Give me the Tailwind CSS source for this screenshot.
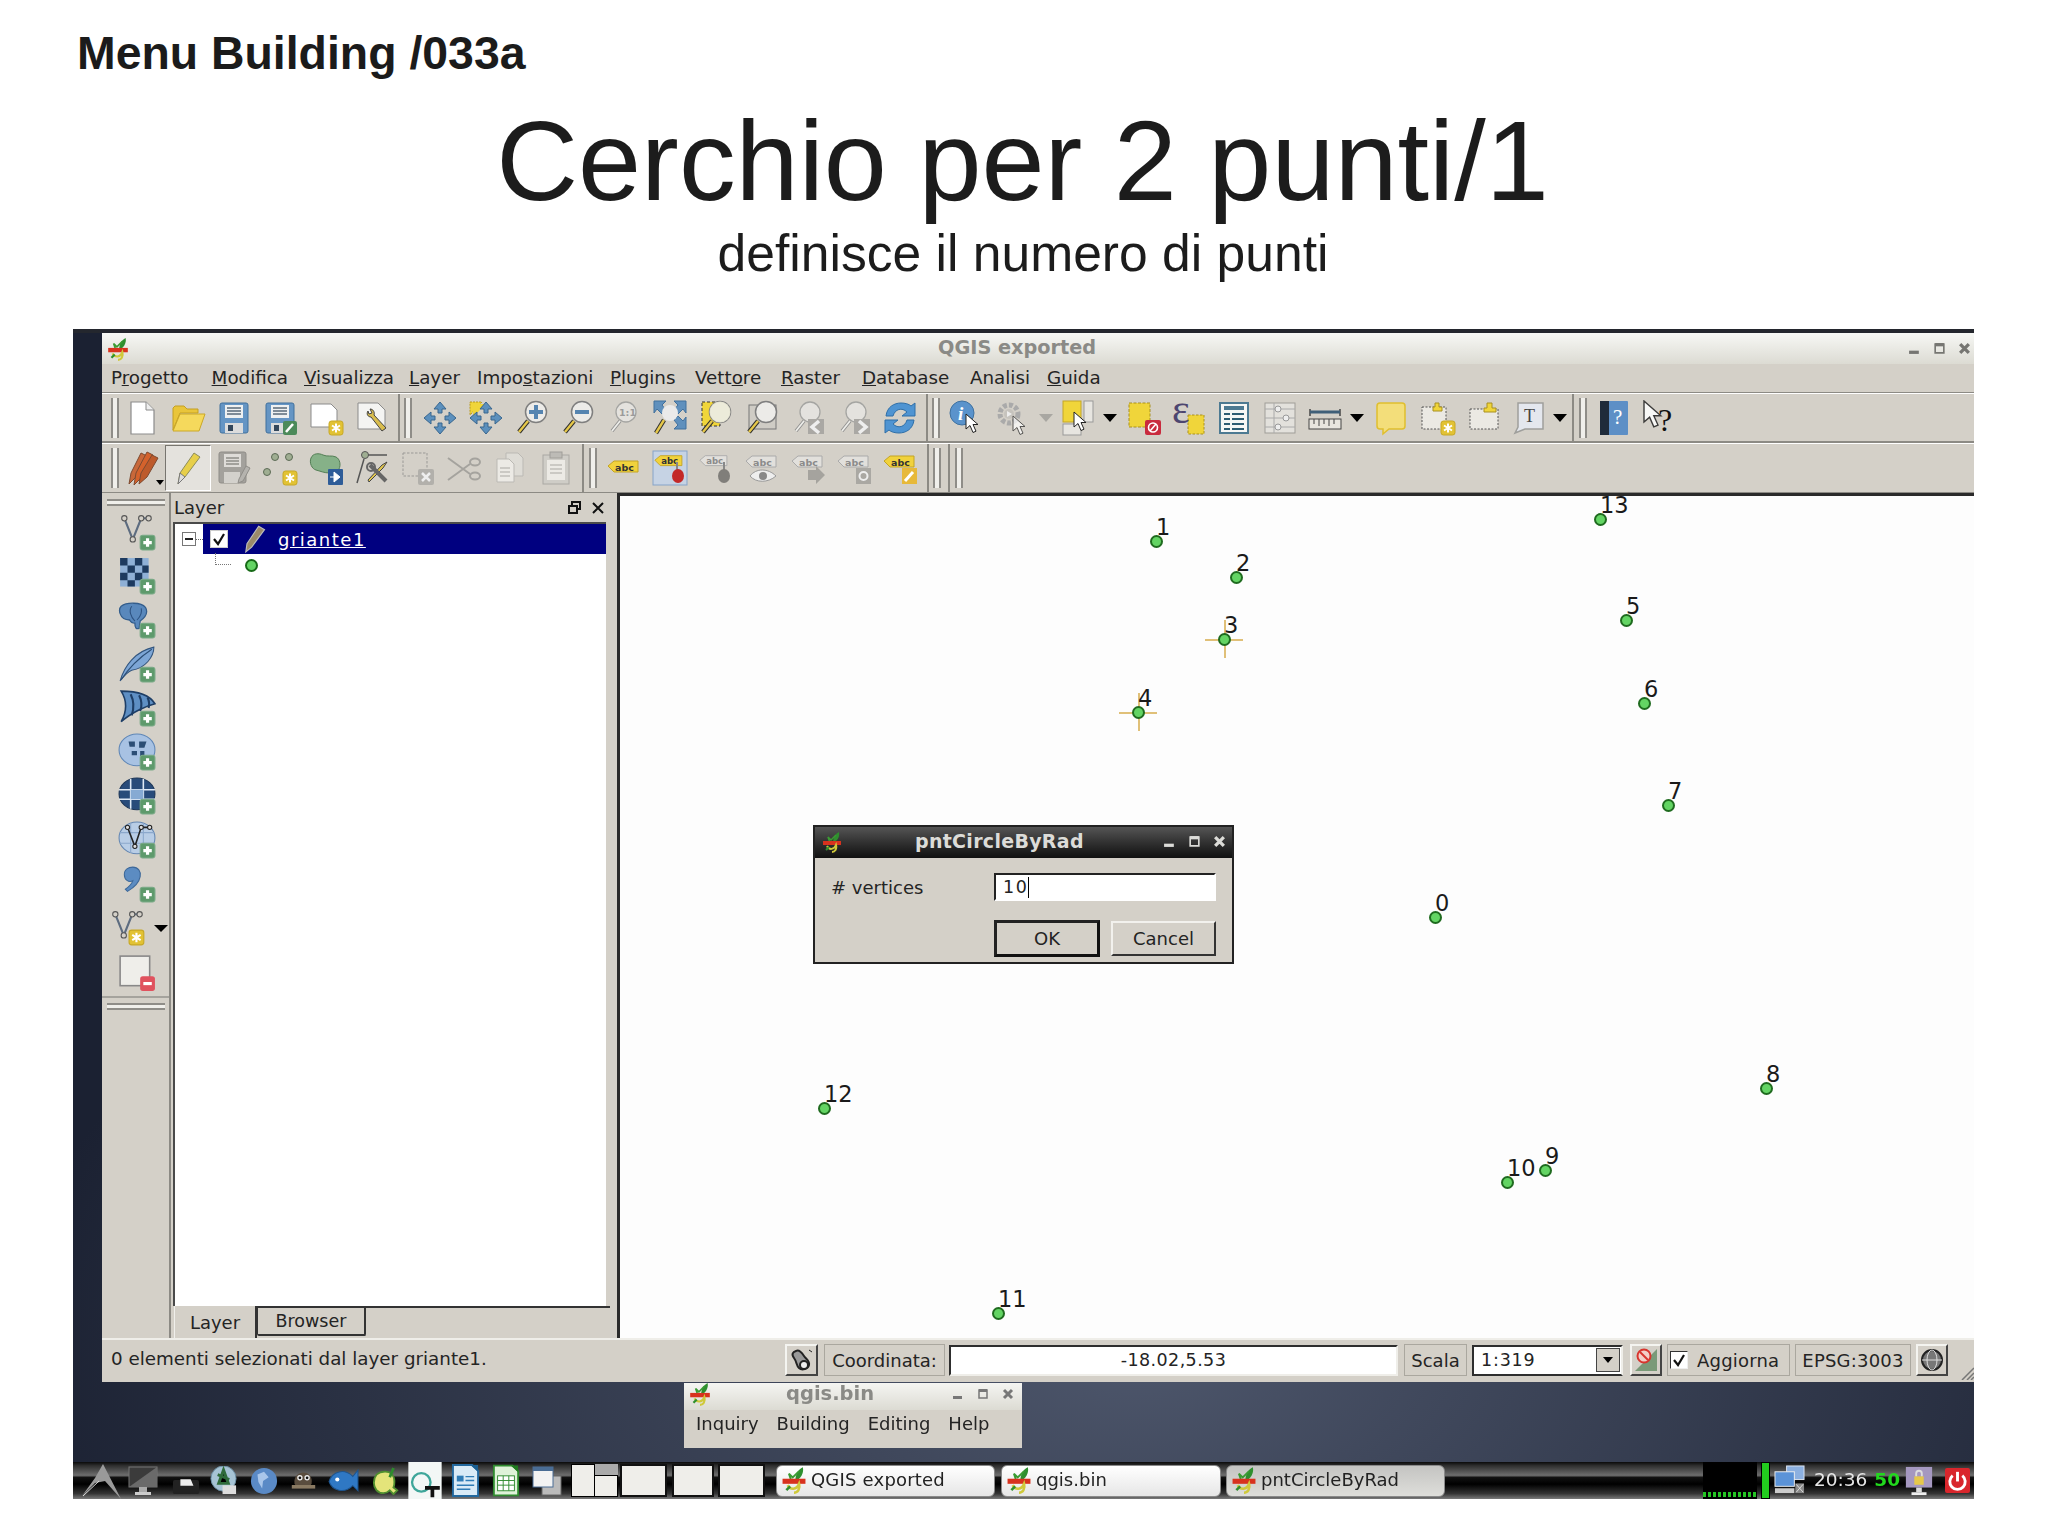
<!DOCTYPE html>
<html lang="it">
<head>
<meta charset="utf-8">
<title>Menu Building /033a</title>
<script src="https://cdn.jsdelivr.net/npm/@tailwindcss/browser@4"></script>
</head>
<body class="bg-white">
<svg class="block h-0 w-0" aria-hidden="true">
<defs>
<g id="lens"><path d="M14 21L5 32" stroke="#2f2f2f" stroke-width="4.4"/><path d="M14 21L5 32" stroke="#e6c84a" stroke-width="2.4"/><circle cx="22" cy="12" r="10.5" fill="#ecebe8" stroke="#7f7f7f" stroke-width="1.5"/></g>
<g id="glens"><path d="M14 21L6 31" stroke="#8f8f8f" stroke-width="3.6"/><path d="M14 21L6 31" stroke="#eeeeea" stroke-width="1.8"/><circle cx="20" cy="12" r="10" fill="#e4e2de" stroke="#a5a5a2" stroke-width="1.3"/></g>
<g id="arrows" fill="#5c90bd" stroke="#39668e"><path d="M18 2l6 7h-4v4h-4v-4h-4z"/><path d="M18 34l6-7h-4v-4h-4v4h-4z"/><path d="M2 18l7-6v4h4v4H9v4z"/><path d="M34 18l-7-6v4h-4v4h4v4z"/></g>
<g id="plus"><rect x="21" y="21" width="14" height="14" rx="2.5" fill="#5e9a6c" stroke="#79a986"/><path d="M28 24v8M24 28h8" stroke="#fff" stroke-width="3"/></g>
<g id="star"><rect x="21" y="21" width="14" height="14" rx="2.5" fill="#e2c234" stroke="#c7a826"/><path d="M28 23.5v9M24 25.5l8 5M32 25.5l-8 5" stroke="#fff" stroke-width="2"/></g>
<g id="abc"><path d="M1 8l6-5h24v11H7z" fill="#f1d23c" stroke="#c3a424"/><text x="8" y="12.5" font-family="DejaVu Sans" font-size="9.5" font-weight="700" fill="#333">abc</text></g>
<g id="gabc"><path d="M1 8l6-5h24v11H7z" fill="#e2e0dc" stroke="#aaa"/><text x="8" y="12.5" font-family="DejaVu Sans" font-size="9.5" font-weight="700" fill="#8b8b8b">abc</text></g>
<g id="cursor"><path d="M0 0v15l4-3.500 3 7 3-1.300-3-6.700h5z" fill="#fff" stroke="#222"/></g>
<g id="logo"><path d="M17 1c1 5-2 9-6 11 0-5 2-9 6-11z" fill="#2f8f2f"/><path d="M14 4l-5 5-3-3 2 6" stroke="#3a9b32" fill="none" stroke-width="1.500"/><rect x="1" y="10" width="18" height="4" fill="#d8321e"/><path d="M5 15c2 4 7 4 9-1 1 4-1 7-4 7" stroke="#cfc93a" stroke-width="2" fill="none"/><path d="M4 19l3-3" stroke="#2f8f2f" stroke-width="2"/></g>
<g id="v"><path d="M6 5l8 20 8-20h6" fill="none" stroke="#5d6c80" stroke-width="2"/><circle cx="6" cy="5" r="2.500" fill="#d4d0c8" stroke="#555"/><circle cx="14" cy="25" r="2.500" fill="#d4d0c8" stroke="#555"/><circle cx="22" cy="5" r="2.500" fill="#d4d0c8" stroke="#555"/><circle cx="29" cy="5" r="2.500" fill="#d4d0c8" stroke="#555"/></g>
<symbol id="new" viewBox="0 0 36 36"><path d="M7 2h15l8 8v24H7z" fill="#fff" stroke="#8b8b8b" stroke-width="1.200"/><path d="M22 2v8h8" fill="#eee" stroke="#8b8b8b"/></symbol>
<symbol id="open" viewBox="0 0 36 36"><path d="M3 30V8l2-2h9l3 3h11v4H10L3 30z" fill="#e9c53a" stroke="#c49f22"/><path d="M3 31l7-17h25l-6 17z" fill="#f5d95c" stroke="#cba826"/></symbol>
<symbol id="save" viewBox="0 0 36 36"><rect x="4" y="3" width="28" height="30" rx="2" fill="#6595c4" stroke="#41709d"/><rect x="9" y="5" width="18" height="13" fill="#eef0f1"/><path d="M11 8h14M11 11h14M11 14h14" stroke="#5a6a7a" stroke-width="1.500"/><rect x="9" y="23" width="18" height="10" fill="#dcdcdc"/><rect x="12" y="25" width="5" height="6" fill="#33475c"/></symbol>
<symbol id="saveas" viewBox="0 0 36 36"><use href="#save"/><rect x="21" y="21" width="14" height="14" rx="2" fill="#4c8a5a"/><path d="M24 32l7-8" stroke="#fff" stroke-width="2.500"/></symbol>
<symbol id="newc" viewBox="0 0 36 36"><path d="M3 4h20l6 6v17H3z" fill="#fff" stroke="#8b8b8b"/><use href="#star"/></symbol>
<symbol id="comp" viewBox="0 0 36 36"><path d="M4 3h20l7 7v19H4z" fill="#f4f4f2" stroke="#8b8b8b"/><path d="M14 11c-2 3 0 6 3 6l11 14 4-3-12-13c1-3-1-6-4-6l2 4-3 1z" fill="#d9bd4e" stroke="#444"/></symbol>
<symbol id="pan" viewBox="0 0 36 36"><use href="#arrows"/></symbol>
<symbol id="pansel" viewBox="0 0 36 36"><path d="M2 2h12L2 15z" fill="#f0d53a" stroke="#b89a20" stroke-dasharray="2 1"/><path d="M5 4h13L5 17z" fill="#f0d53a"/><use href="#arrows"/></symbol>
<symbol id="zin" viewBox="0 0 36 36"><use href="#lens"/><path d="M22 5v14M15 12h14" stroke="#5584b0" stroke-width="4"/></symbol>
<symbol id="zout" viewBox="0 0 36 36"><use href="#lens"/><path d="M15 12h14" stroke="#5584b0" stroke-width="4"/></symbol>
<symbol id="z11" viewBox="0 0 36 36"><use href="#glens"/><text x="13" y="16" font-family="DejaVu Sans" font-size="9.500" font-weight="700" fill="#9b9b9b">1:1</text></symbol>
<symbol id="zfull" viewBox="0 0 36 36"><path d="M2 1h12l-4 4 4 5-4 4-5-5-3 4zM34 1H22l4 4-4 5 4 4 5-5 3 4zM34 29H22l4-4-4-5 4-4 5 5 3-4z" fill="#5f90bd" stroke="#41709d"/><circle cx="18" cy="13" r="8" fill="#eaeaea"/><path d="M12 20L4 33" stroke="#2f2f2f" stroke-width="4.400"/><path d="M12 20L4 33" stroke="#e6c84a" stroke-width="2.400"/></symbol>
<symbol id="zsel" viewBox="0 0 36 36"><rect x="4" y="2" width="18" height="24" fill="#f0d53a" stroke="#333" stroke-dasharray="3 2"/><use href="#lens"/><circle cx="22" cy="12" r="10.500" fill="#ecebd8" opacity=".9"/></symbol>
<symbol id="zlay" viewBox="0 0 36 36"><rect x="5" y="5" width="27" height="24" fill="#cfccc5" stroke="#777"/><use href="#lens"/></symbol>
<symbol id="zlast" viewBox="0 0 36 36"><use href="#glens"/><rect x="18" y="19" width="16" height="15" fill="#aaa8a4"/><path d="M29 21l-7 6 7 6" stroke="#eee" stroke-width="3.500" fill="none"/></symbol>
<symbol id="znext" viewBox="0 0 36 36"><use href="#glens"/><rect x="18" y="19" width="16" height="15" fill="#aaa8a4"/><path d="M23 21l7 6-7 6" stroke="#eee" stroke-width="3.500" fill="none"/></symbol>
<symbol id="refresh" viewBox="0 0 36 36"><path d="M4 16C5 7 12 3 19 3c4 0 8 1 10 3l4-3v13H20l5-4c-5-5-12-3-14 4z" fill="#4f94d2" stroke="#2f6fa8"/><path d="M32 20c-1 9-8 13-15 13-4 0-8-1-10-3l-4 3V20h13l-5 4c5 5 12 3 14-4z" fill="#4f94d2" stroke="#2f6fa8"/></symbol>
<symbol id="ident" viewBox="0 0 36 36"><circle cx="13" cy="13" r="12" fill="#5a93cc" stroke="#3f719f"/><text x="9" y="20" font-family="Liberation Serif" font-size="19" font-weight="700" font-style="italic" fill="#fff">i</text><use href="#cursor" transform="translate(17 14)"/></symbol>
<symbol id="action" viewBox="0 0 36 36"><circle cx="14" cy="14" r="9" fill="none" stroke="#aaa" stroke-width="5" stroke-dasharray="4 2"/><circle cx="14" cy="14" r="5" fill="#c6c3bd"/><path d="M12 11l5 3-5 3z" fill="#eee"/><use href="#cursor" transform="translate(18 16)" opacity=".7"/></symbol>
<symbol id="select" viewBox="0 0 36 36"><rect x="3" y="1" width="18" height="21" fill="#f0d53a" stroke="#c4a626"/><rect x="24" y="1" width="9" height="21" fill="#e7e5e0" stroke="#999"/><rect x="3" y="24" width="18" height="11" fill="#e7e5e0" stroke="#999"/><use href="#cursor" transform="translate(14 12)"/></symbol>
<symbol id="desel" viewBox="0 0 36 36"><rect x="3" y="3" width="21" height="24" fill="#f0d53a" stroke="#a89020" stroke-dasharray="3 1.500"/><rect x="19" y="20" width="16" height="15" rx="2" fill="#c92b3e"/><circle cx="27" cy="27.500" r="4.500" fill="none" stroke="#fff" stroke-width="1.600"/><path d="M24 31l6-7" stroke="#fff" stroke-width="1.600"/></symbol>
<symbol id="expr" viewBox="0 0 36 36"><rect x="17" y="15" width="16" height="19" fill="#f0d53a" stroke="#a89020" stroke-dasharray="2.500 1.500"/><text x="1" y="23" font-family="Liberation Serif" font-size="42" fill="#4d4670">ε</text></symbol>
<symbol id="table" viewBox="0 0 36 36"><rect x="4" y="3" width="28" height="30" fill="#f7f7f5" stroke="#4d7a92" stroke-width="2"/><rect x="8" y="6" width="20" height="4" fill="#4d7a92"/><path d="M8 14h6M16 14h12M8 19h6M16 19h12M8 24h6M16 24h12M8 29h6M16 29h12" stroke="#2f5d73" stroke-width="2"/></symbol>
<symbol id="stats" viewBox="0 0 36 36"><rect x="3" y="3" width="30" height="30" fill="#e3e1dc" stroke="#9f9d98"/><path d="M3 9h30M3 18h30M3 27h30M12 3v30" stroke="#aaa"/><circle cx="16" cy="9" r="3" fill="#eee" stroke="#999"/><circle cx="24" cy="18" r="3" fill="#eee" stroke="#999"/><circle cx="16" cy="27" r="3" fill="#eee" stroke="#999"/></symbol>
<symbol id="measure" viewBox="0 0 36 36"><path d="M3 9v7M33 9v7" stroke="#444" stroke-width="1.500"/><path d="M3 12h30" stroke="#3f5f78" stroke-width="3"/><rect x="2" y="19" width="32" height="10" fill="#e8e6e0" stroke="#444"/><path d="M7 19v5M12 19v7M17 19v5M22 19v7M27 19v5" stroke="#444"/></symbol>
<symbol id="tip" viewBox="0 0 36 36"><path d="M8 3h21a3 3 0 013 3v20a3 3 0 01-3 3H16l-6 5v-5H7a3 3 0 01-3-3V6a3 3 0 013-3z" fill="#f3de7a" stroke="#e0bf2e" stroke-width="1.500"/></symbol>
<symbol id="annew" viewBox="0 0 36 36"><rect x="2" y="7" width="24" height="22" fill="#ebe9e3" stroke="#555" stroke-dasharray="2 1.500"/><path d="M15 3h4v4h3v4H13V7h2z" fill="#f0d53a" stroke="#a89020"/><use href="#star"/></symbol>
<symbol id="anmove" viewBox="0 0 36 36"><rect x="4" y="9" width="28" height="20" fill="#ebe9e3" stroke="#555" stroke-dasharray="2 1.500"/><path d="M21 3h5v5h4v4H18V8h3z" fill="#f0d53a" stroke="#a89020"/></symbol>
<symbol id="tann" viewBox="0 0 36 36"><path d="M7 3h25v26H14l-10 4 3-6z" fill="#e4e7ee" stroke="#9f9f9c" stroke-width="1.500"/><text x="13" y="22" font-family="Liberation Serif" font-size="18" fill="#444">T</text></symbol>
<symbol id="help" viewBox="0 0 36 36"><rect x="4" y="1" width="28" height="34" rx="1" fill="#5d8fc6"/><rect x="4" y="1" width="9" height="34" fill="#1f2b3a"/><text x="17" y="24" font-family="Liberation Serif" font-size="21" fill="#fff">?</text></symbol>
<symbol id="whats" viewBox="0 0 36 36"><use href="#cursor" transform="translate(2 1) scale(1.400)" opacity=".85"/><text x="16" y="31" font-family="Liberation Serif" font-size="32" fill="#111">?</text></symbol>
<symbol id="pencils" viewBox="0 0 36 36"><path d="M5 34l2-11L17 3l6 3-11 21z" fill="#c8683a" stroke="#7d4a30"/><path d="M10 35l2-12L23 2l6 3-10 21z" fill="#d4622c" stroke="#7d4a30"/><path d="M15 34l2-11L28 5l6 3-11 19z" fill="#bd5a2b" stroke="#7d4a30"/></symbol>
<symbol id="pencil" viewBox="0 0 36 36"><path d="M8 34l2-11L24 3l6 4-15 20z" fill="#e7cf4a" stroke="#8c8c5a"/><path d="M8 34l2-11 5 4z" fill="#ddd" stroke="#777"/></symbol>
<symbol id="gsave" viewBox="0 0 36 36"><rect x="3" y="2" width="27" height="31" rx="2" fill="#a3a19c" stroke="#8f8d88"/><rect x="8" y="4" width="17" height="13" fill="#dedcd8"/><path d="M10 8h13M10 11h13M10 14h13" stroke="#8f8d88" stroke-width="1.500"/><rect x="8" y="22" width="16" height="11" fill="#d3d1cc"/><path d="M22 33l5-2 7-13-4-2-7 13z" fill="#b5b3ae" stroke="#8f8d88"/></symbol>
<symbol id="addpt" viewBox="0 0 36 36"><circle cx="13" cy="7" r="3.500" fill="#9fae92" stroke="#5c6a55"/><circle cx="27" cy="7" r="3.500" fill="#9fae92" stroke="#5c6a55"/><circle cx="5" cy="22" r="3.500" fill="#9fae92" stroke="#5c6a55"/><use href="#star"/></symbol>
<symbol id="addpoly" viewBox="0 0 36 36"><path d="M3 8c2-5 8-5 12-3s9 0 13 2 5 8 3 12-3 4-9 4-10-2-14-3-7-7-5-12z" fill="#86b188" stroke="#537e55"/><rect x="20" y="19" width="15" height="16" rx="1" fill="#2e5c98"/><path d="M22 27h6M26 22l6 5-6 5z" fill="#fff" stroke="#fff"/></symbol>
<symbol id="node" viewBox="0 0 36 36"><circle cx="11" cy="5" r="3.500" fill="#9fae92" stroke="#555"/><path d="M10 9L3 33M14 5h19" stroke="#555" stroke-width="1.500"/><path d="M15 32l14-14 4-6-5 3-14 15z" fill="#e2c74e" stroke="#444"/><path d="M16 15l16 16" stroke="#666" stroke-width="4"/><circle cx="17" cy="17" r="4" fill="none" stroke="#666" stroke-width="2"/></symbol>
<symbol id="delsel" viewBox="0 0 36 36"><rect x="3" y="3" width="24" height="23" fill="none" stroke="#9a9996" stroke-dasharray="2.500 1.500"/><rect x="18" y="19" width="16" height="16" rx="2" fill="#b2b0ab"/><path d="M22 23l8 8M30 23l-8 8" stroke="#eee" stroke-width="2.500"/></symbol>
<symbol id="scissors" viewBox="0 0 36 36"><path d="M2 8l22 16M2 30l22-16" stroke="#a5a39e" stroke-width="2"/><ellipse cx="29" cy="26" rx="5" ry="3.500" fill="none" stroke="#a5a39e" stroke-width="2"/><ellipse cx="29" cy="12" rx="5" ry="3.500" fill="none" stroke="#a5a39e" stroke-width="2"/></symbol>
<symbol id="copy" viewBox="0 0 36 36"><path d="M14 3h12l5 5v18H14z" fill="#dedcd6" stroke="#bbb9b4"/><path d="M5 9h12l5 5v18H5z" fill="#eceae5" stroke="#bbb9b4"/><path d="M8 18h10M8 22h10M8 26h10" stroke="#aaa8a3"/></symbol>
<symbol id="paste" viewBox="0 0 36 36"><rect x="5" y="5" width="26" height="29" fill="#cfcdc7" stroke="#aaa8a3"/><rect x="12" y="2" width="12" height="6" fill="#bdbbb6" stroke="#a09e99"/><rect x="9" y="10" width="18" height="20" fill="#eceae5"/><path d="M12 15h12M12 19h12M12 23h12" stroke="#aaa8a3"/></symbol>
<symbol id="lb1" viewBox="0 0 36 36"><use href="#abc" transform="translate(1 8)"/></symbol>
<symbol id="lb2" viewBox="0 0 36 36"><rect x="1" y="1" width="34" height="34" fill="#c6d3e4" stroke="#86a3c8"/><use href="#abc" transform="translate(2 3) scale(.9)"/><path d="M25 12v10" stroke="#888" stroke-width="2"/><ellipse cx="26" cy="26" rx="6" ry="7" fill="#c32828"/></symbol>
<symbol id="lb3" viewBox="0 0 36 36"><use href="#gabc" transform="translate(1 3) scale(.9)"/><path d="M26 12v10" stroke="#888" stroke-width="2"/><ellipse cx="26" cy="26" rx="6" ry="7" fill="#807e7a"/></symbol>
<symbol id="lb4" viewBox="0 0 36 36"><use href="#gabc" transform="translate(1 3)"/><path d="M6 26c6-8 18-8 26 0-8 7-20 7-26 0z" fill="#eee" stroke="#999"/><circle cx="19" cy="26" r="4" fill="#888"/></symbol>
<symbol id="lb5" viewBox="0 0 36 36"><use href="#gabc" transform="translate(1 3)"/><path d="M18 20h8v-4l9 9-9 9v-4h-8z" fill="#a5a39e"/></symbol>
<symbol id="lb6" viewBox="0 0 36 36"><use href="#gabc" transform="translate(1 3)"/><rect x="20" y="18" width="15" height="16" fill="#aaa8a3"/><circle cx="27.500" cy="26" r="4" fill="none" stroke="#eee" stroke-width="2"/></symbol>
<symbol id="lb7" viewBox="0 0 36 36"><use href="#abc" transform="translate(1 3)"/><rect x="20" y="18" width="15" height="16" fill="#e7b93a"/><path d="M23 31l8-9" stroke="#fff" stroke-width="3"/></symbol>
<symbol id="lv" viewBox="0 0 36 36"><use href="#v"/><use href="#plus"/></symbol>
<symbol id="lr" viewBox="0 0 36 36"><rect x="2" y="1" width="27" height="27" fill="#8fb0d6"/><path d="M2 1h7v7H2zM16 1h7v7h-7zM9 8h7v7H9zM23 8h6v7h-6zM2 15h7v7H2zM16 15h7v7h-7zM9 22h7v6H9z" fill="#1d3a5f"/><use href="#plus"/></symbol>
<symbol id="lpg" viewBox="0 0 36 36"><path d="M3 5c5-4 19-4 23 1 3 5-1 10-5 13l-1 7c-3 1-4-1-4-5-3 0-4-1-5-3-5 0-8-3-9-6-1-3-1-5 1-7z" fill="#5988bc" stroke="#335d8c" stroke-width="1.200"/><path d="M13 5c-3 4-1 10 3 14M22 7c1 4-1 8-4 11" stroke="#2d5280" fill="none"/><use href="#plus"/></symbol>
<symbol id="lfe" viewBox="0 0 36 36"><path d="M2 34C6 20 16 6 34 2c0 9-8 20-21 22-3 1-7 5-11 10z" fill="#7da6d6" stroke="#33557d"/><path d="M3 33C10 22 20 12 32 4" stroke="#2c4e75" fill="none"/><use href="#plus"/></symbol>
<symbol id="lsa" viewBox="0 0 36 36"><path d="M3 2c12 0 26 2 32 12-8 2-22 8-32 17C9 20 8 10 3 2z" fill="#5e8fc4" stroke="#1e3e66" stroke-width="1.500"/><path d="M12 5c4 8 3 14 1 20M20 6c3 6 3 10 1 15M28 8c2 4 2 6 1 10" stroke="#1e3e66" stroke-width="2" fill="none"/><use href="#plus"/></symbol>
<symbol id="lwms" viewBox="0 0 36 36"><ellipse cx="18" cy="16" rx="17" ry="15" fill="#a8c2e3" stroke="#5e86b7"/><path d="M10 8h6v5h-5zM20 8h7l-2 6h-5zM13 17h5v4h-5zM21 17h4v9h-4z" fill="#2c4e75"/><use href="#plus"/></symbol>
<symbol id="lwcs" viewBox="0 0 36 36"><ellipse cx="18" cy="16" rx="17" ry="15" fill="#284b7a" stroke="#1c3557"/><path d="M1 12h34M1 21h34M12 2v28M24 2v28" stroke="#dfe9f5" stroke-width="1.500"/><rect x="12" y="12" width="12" height="9" fill="#86aad3"/><use href="#plus"/></symbol>
<symbol id="lwfs" viewBox="0 0 36 36"><ellipse cx="18" cy="16" rx="17" ry="15" fill="#b8cde6" stroke="#6487b3"/><path d="M2 11h32M2 21h32M12 2v28M24 2v28" stroke="#8ba8cc"/><path d="M9 6l7 18 6-18h8" fill="none" stroke="#222" stroke-width="1.500"/><circle cx="9" cy="6" r="2" fill="#ddd" stroke="#222"/><circle cx="16" cy="24" r="2" fill="#ddd" stroke="#222"/><circle cx="22" cy="6" r="2" fill="#ddd" stroke="#222"/><circle cx="30" cy="6" r="2" fill="#ddd" stroke="#222"/><use href="#plus"/></symbol>
<symbol id="lcom" viewBox="0 0 36 36"><path d="M6 9c0-5 4-7 8-7 5 0 8 4 7 9-1 6-7 11-12 14l-2-2c4-3 6-5 7-8-4 2-8-1-8-6z" fill="#5c8cc2" stroke="#3d6899"/><use href="#plus"/></symbol>
<symbol id="lnew" viewBox="0 0 36 36"><use href="#v"/><use href="#star" transform="translate(-2 -1)"/></symbol>
<symbol id="lrem" viewBox="0 0 36 36"><rect x="2" y="2" width="28" height="28" fill="#efeeea" stroke="#888" stroke-width="1.500"/><rect x="21" y="21" width="14" height="14" rx="2.500" fill="#e0525e"/><path d="M24 28h8" stroke="#fff" stroke-width="3"/></symbol>
<symbol id="mini" viewBox="0 0 20 22"><use href="#logo"/></symbol>
<symbol id="arch" viewBox="0 0 40 36"><path d="M22 1L40 36 24 18 14 20 1 33 14 15z" fill="#9a9a9a"/><path d="M2 33L18 18" stroke="#ddd"/></symbol>
<symbol id="t1" viewBox="0 0 30 30"><rect x="1" y="1" width="28" height="20" fill="#3b3b3b" stroke="#777"/><path d="M1 21L29 1v20z" fill="#6a6a6a"/><rect x="11" y="21" width="8" height="5" fill="#aaa"/><rect x="7" y="26" width="16" height="3" fill="#ccc"/></symbol>
<symbol id="t2" viewBox="0 0 30 30"><rect x="1" y="14" width="28" height="15" rx="2" fill="#222"/><path d="M9 13h11l3 7H9z" fill="#eee"/></symbol>
<symbol id="t3" viewBox="0 0 30 30"><ellipse cx="15" cy="13" rx="13" ry="13" fill="#a6c3d4" stroke="#6b8da3"/><path d="M15 4l-5 14h10zM9 9l12 5" stroke="#2f6b3a" stroke-width="3"/><rect x="14" y="20" width="14" height="9" fill="#ddd"/></symbol>
<symbol id="t4" viewBox="0 0 30 30"><circle cx="15" cy="15" r="14" fill="#5a8ac6"/><path d="M8 8l7-3 5 6-6 4-1 8-4-7z" fill="#a9c6ea"/></symbol>
<symbol id="t5" viewBox="0 0 30 30"><path d="M5 18c-1-7 4-12 10-12s10 5 9 12-18 7-19 0z" fill="#5a4d3e"/><circle cx="11" cy="12" r="3" fill="#eee"/><circle cx="19" cy="12" r="3" fill="#eee"/><circle cx="11" cy="12" r="1.500" fill="#111"/><circle cx="19" cy="12" r="1.500" fill="#111"/><rect x="2" y="20" width="26" height="4" fill="#8a7a62"/></symbol>
<symbol id="t6" viewBox="0 0 30 30"><path d="M1 16C4 6 16 3 24 11l5-6v20l-5-5c-8 8-20 5-23-4z" fill="#2f78c4" stroke="#1e558f"/><circle cx="9" cy="14" r="2" fill="#fff"/></symbol>
<symbol id="t7" viewBox="0 0 30 30"><path d="M14 5C5 5 2 11 2 17s4 11 10 11c3 0 5-1 7-3l4 4 4-4-4-3c1-2 1-4 1-6 0-7-4-11-10-11z" fill="#e4e47a" stroke="#4f8f2f" stroke-width="2"/><path d="M23 1l-4 10" stroke="#2e8a2e" stroke-width="3"/></symbol>
<symbol id="t8" viewBox="0 0 36 40"><rect width="36" height="40" fill="#f3f7f6"/><circle cx="14" cy="22" r="10" fill="none" stroke="#3ea69a" stroke-width="2.500"/><path d="M18 28h16M26 28v10" stroke="#111" stroke-width="4"/></symbol>
<symbol id="t9" viewBox="0 0 30 34"><path d="M2 1h20l6 6v26H2z" fill="#d9ebf7" stroke="#22689e" stroke-width="2"/><path d="M20 1l8 0v7z" fill="#1b5f92"/><rect x="6" y="12" width="7" height="6" fill="#2f7cb6"/><path d="M15 13h9M15 17h9M6 22h18M6 26h14" stroke="#2f7cb6" stroke-width="1.500"/></symbol>
<symbol id="t10" viewBox="0 0 30 34"><path d="M2 1h20l6 6v26H2z" fill="#dff2d9" stroke="#2e8a2e" stroke-width="2"/><path d="M20 1l8 0v7z" fill="#1f7a1f"/><rect x="6" y="12" width="18" height="16" fill="#fff" stroke="#2e8a2e"/><path d="M6 17h18M6 22h18M12 12v16M18 12v16" stroke="#2e8a2e"/></symbol>
<symbol id="t11" viewBox="0 0 30 30"><rect x="10" y="10" width="19" height="19" fill="#bbb" stroke="#666"/><rect x="1" y="1" width="20" height="20" fill="#f3f3f3" stroke="#4a6d95"/><rect x="1" y="1" width="20" height="4" fill="#4a6d95"/></symbol>
<symbol id="net" viewBox="0 0 32 32"><rect x="13" y="1" width="18" height="14" fill="#8cb0e0" stroke="#dce4f0"/><rect x="1" y="7" width="20" height="15" fill="#5b93d8" stroke="#eee"/><rect x="1" y="24" width="20" height="5" fill="#ccc"/><rect x="22" y="19" width="9" height="10" fill="#888"/><path d="M23 20l7 8M30 20l-7 8" stroke="#ddd"/></symbol>
<symbol id="lockm" viewBox="0 0 30 32"><rect x="1" y="1" width="28" height="22" fill="#a598c0"/><rect x="10" y="11" width="10" height="9" fill="#e6c84a"/><path d="M12 11V8a3 3 0 016 0v3" fill="none" stroke="#ddd" stroke-width="2"/><rect x="12" y="23" width="6" height="5" fill="#ddd"/><rect x="7" y="28" width="16" height="3" fill="#eee"/></symbol>
<symbol id="power" viewBox="0 0 26 26"><rect width="26" height="26" rx="2" fill="#d9262c"/><path d="M8 8a8 8 0 1010 0" fill="none" stroke="#fff" stroke-width="3"/><path d="M13 4v10" stroke="#fff" stroke-width="3"/></symbol>
<symbol id="wmin" viewBox="0 0 12 12"><rect x="1" y="8" width="9" height="3" fill="currentColor"/></symbol>
<symbol id="wmax" viewBox="0 0 12 12"><path d="M2 2h8v8H2z" fill="none" stroke="currentColor" stroke-width="1.500"/><rect x="2" y="1" width="8" height="3" fill="currentColor"/></symbol>
<symbol id="wclose" viewBox="0 0 12 12"><path d="M2 2l8 8M10 2l-8 8" stroke="currentColor" stroke-width="3"/></symbol>
</defs>
</svg>

<main class="h-[1535px] w-[2048px] overflow-hidden bg-white font-['Liberation_Sans',Arial,sans-serif] text-[#1c1c1c]">
  <h1 class="flex h-[107px] items-center pl-[77px] text-[46.400px] font-bold text-[#1b1b1b]">Menu Building /033a</h1>
  <h2 class="flex h-[106px] items-center justify-center pt-[2px] pr-[3px] text-[113.400px] leading-none font-normal">Cerchio per 2 punti/1</h2>
  <p class="flex h-[116px] items-start justify-center pt-[15px] pr-[2px] text-[51.600px] leading-none">definisce il numero di punti</p>

  <section class="relative ml-[73px] flex h-[1170px] w-[1901px] flex-col overflow-hidden border-t-4 border-[#24272e] bg-[radial-gradient(ellipse_60%_50%_at_56%_88%,#4d566b,#1b2132)] font-['DejaVu_Sans',sans-serif] text-[#242424] blur-[0.6px]">
    <!-- main window -->
    <div class="ml-[29px] flex h-[1049px] w-[1872px] flex-col bg-[#d4d0c8]">
      <div class="relative flex h-[31px] items-center bg-gradient-to-b from-[#f7f8f5] to-[#dcdbd3]">
        <svg class="ml-[4px] size-[24px]"><use href="#mini"/></svg>
        <span class="ml-[808px] text-[19.300px] font-bold text-[#8a8a86]">QGIS exported</span>
        <div class="ml-auto flex gap-[12px] pr-[3px] text-[#767672]">
          <svg class="size-[13px]"><use href="#wmin"/></svg><svg class="size-[13px]"><use href="#wmax"/></svg><svg class="size-[13px]"><use href="#wclose"/></svg>
        </div>
      </div>
      <nav class="flex h-[29px] items-center border-b border-[#8c8a84] pl-[9px] text-[18.300px]">
        <span class="w-[100.600px]">P<u>r</u>ogetto</span><span class="w-[92.400px]"><u>M</u>odifica</span><span class="w-[105px]"><u>V</u>isualizza</span><span class="w-[68px]"><u>L</u>ayer</span><span class="w-[133px]">Impo<u>s</u>tazioni</span><span class="w-[85px]"><u>P</u>lugins</span><span class="w-[86px]">Vett<u>o</u>re</span><span class="w-[81px]"><u>R</u>aster</span><span class="w-[108px]"><u>D</u>atabase</span><span class="w-[77px]">Analisi</span><span><u>G</u>uida</span>
      </nav>
      <!-- toolbar 1 -->
      <div class="flex h-[50px] items-center border-t border-white border-b-2 border-b-[#8c8a84]">
        <div class="ml-[9px] h-[40px] w-[8px] border-x-2 border-[#8f8d88] bg-[#f0efeb]"></div>
        <div class="flex h-full items-center border-r-2 border-[#8c8a84] pr-[3px]">
          <span class="flex w-[46px] justify-center"><svg class="size-9"><use href="#new"/></svg></span>
          <span class="flex w-[46px] justify-center"><svg class="size-9"><use href="#open"/></svg></span>
          <span class="flex w-[46px] justify-center"><svg class="size-9"><use href="#save"/></svg></span>
          <span class="flex w-[46px] justify-center"><svg class="size-9"><use href="#saveas"/></svg></span>
          <span class="flex w-[46px] justify-center"><svg class="size-9"><use href="#newc"/></svg></span>
          <span class="flex w-[46px] justify-center"><svg class="size-9"><use href="#comp"/></svg></span>
        </div>
        <div class="ml-[4px] h-[40px] w-[8px] border-x-2 border-[#8f8d88] bg-[#f0efeb]"></div>
        <div class="ml-[5px] flex h-full items-center border-r-2 border-[#8c8a84] pr-[3px]">
          <span class="flex w-[46px] justify-center"><svg class="size-9"><use href="#pan"/></svg></span>
          <span class="flex w-[46px] justify-center"><svg class="size-9"><use href="#pansel"/></svg></span>
          <span class="flex w-[46px] justify-center"><svg class="size-9"><use href="#zin"/></svg></span>
          <span class="flex w-[46px] justify-center"><svg class="size-9"><use href="#zout"/></svg></span>
          <span class="flex w-[46px] justify-center"><svg class="size-9"><use href="#z11"/></svg></span>
          <span class="flex w-[46px] justify-center"><svg class="size-9"><use href="#zfull"/></svg></span>
          <span class="flex w-[46px] justify-center"><svg class="size-9"><use href="#zsel"/></svg></span>
          <span class="flex w-[46px] justify-center"><svg class="size-9"><use href="#zlay"/></svg></span>
          <span class="flex w-[46px] justify-center"><svg class="size-9"><use href="#zlast"/></svg></span>
          <span class="flex w-[46px] justify-center"><svg class="size-9"><use href="#znext"/></svg></span>
          <span class="flex w-[46px] justify-center"><svg class="size-9"><use href="#refresh"/></svg></span>
        </div>
        <div class="ml-[4px] h-[40px] w-[8px] border-x-2 border-[#8f8d88] bg-[#f0efeb]"></div>
        <div class="ml-[4px] flex h-full items-center border-r-2 border-[#8c8a84] pr-[3px]">
          <span class="flex w-[46px] justify-center"><svg class="size-9"><use href="#ident"/></svg></span>
          <span class="flex w-[45px] justify-center"><svg class="size-9"><use href="#action"/></svg></span>
          <span class="flex w-[22px] justify-center"><span class="size-0 border-x-[7px] border-t-[8px] border-x-transparent border-t-[#a9a7a2]"></span></span>
          <span class="flex w-[42px] justify-center"><svg class="size-9"><use href="#select"/></svg></span>
          <span class="flex w-[22px] justify-center"><span class="size-0 border-x-[7px] border-t-[8px] border-x-transparent border-t-black"></span></span>
          <span class="flex w-[45px] justify-center"><svg class="size-9"><use href="#desel"/></svg></span>
          <span class="flex w-[45px] justify-center"><svg class="size-9"><use href="#expr"/></svg></span>
          <span class="flex w-[46px] justify-center"><svg class="size-9"><use href="#table"/></svg></span>
          <span class="flex w-[46px] justify-center"><svg class="size-9"><use href="#stats"/></svg></span>
          <span class="flex w-[43px] justify-center"><svg class="size-9"><use href="#measure"/></svg></span>
          <span class="flex w-[22px] justify-center"><span class="size-0 border-x-[7px] border-t-[8px] border-x-transparent border-t-black"></span></span>
          <span class="flex w-[46px] justify-center"><svg class="size-9"><use href="#tip"/></svg></span>
          <span class="flex w-[48px] justify-center"><svg class="size-9"><use href="#annew"/></svg></span>
          <span class="flex w-[44px] justify-center"><svg class="size-9"><use href="#anmove"/></svg></span>
          <span class="flex w-[45px] justify-center"><svg class="size-9"><use href="#tann"/></svg></span>
          <span class="flex w-[18px] justify-center"><span class="size-0 border-x-[7px] border-t-[8px] border-x-transparent border-t-black"></span></span>
        </div>
        <div class="ml-[5px] h-[40px] w-[8px] border-x-2 border-[#8f8d88] bg-[#f0efeb]"></div>
        <div class="ml-[4px] flex items-center">
          <span class="flex w-[46px] justify-center"><svg class="size-9"><use href="#help"/></svg></span>
          <span class="flex w-[45px] justify-center"><svg class="size-9"><use href="#whats"/></svg></span>
        </div>
      </div>
      <!-- toolbar 2 -->
      <div class="flex h-[50px] items-center border-t border-white border-b border-b-[#8c8a84]">
        <div class="ml-[9px] h-[40px] w-[8px] border-x-2 border-[#8f8d88] bg-[#f0efeb]"></div>
        <div class="flex h-full items-center border-r-2 border-[#8c8a84] pr-[3px]">
          <span class="relative flex w-[46px] justify-center"><svg class="size-9"><use href="#pencils"/></svg><span class="absolute right-[1px] bottom-[1px] size-0 border-x-[4px] border-t-[5px] border-x-transparent border-t-black"></span></span>
          <span class="flex h-[46px] w-[46px] items-center justify-center border border-t-[#77756f] border-l-[#77756f] border-r-white border-b-white bg-[#e4e2dd]"><svg class="size-9"><use href="#pencil"/></svg></span>
          <span class="flex w-[46px] justify-center"><svg class="size-9"><use href="#gsave"/></svg></span>
          <span class="flex w-[46px] justify-center"><svg class="size-9"><use href="#addpt"/></svg></span>
          <span class="flex w-[46px] justify-center"><svg class="size-9"><use href="#addpoly"/></svg></span>
          <span class="flex w-[46px] justify-center"><svg class="size-9"><use href="#node"/></svg></span>
          <span class="flex w-[46px] justify-center"><svg class="size-9"><use href="#delsel"/></svg></span>
          <span class="flex w-[46px] justify-center"><svg class="size-9"><use href="#scissors"/></svg></span>
          <span class="flex w-[46px] justify-center"><svg class="size-9"><use href="#copy"/></svg></span>
          <span class="flex w-[46px] justify-center"><svg class="size-9"><use href="#paste"/></svg></span>
        </div>
        <div class="ml-[5px] h-[40px] w-[8px] border-x-2 border-[#8f8d88] bg-[#f0efeb]"></div>
        <div class="ml-[4px] flex h-full items-center border-r-2 border-[#8c8a84] pr-[4px]">
          <span class="flex w-[46px] justify-center"><svg class="size-9"><use href="#lb1"/></svg></span>
          <span class="flex w-[46px] justify-center"><svg class="size-9"><use href="#lb2"/></svg></span>
          <span class="flex w-[46px] justify-center"><svg class="size-9"><use href="#lb3"/></svg></span>
          <span class="flex w-[46px] justify-center"><svg class="size-9"><use href="#lb4"/></svg></span>
          <span class="flex w-[46px] justify-center"><svg class="size-9"><use href="#lb5"/></svg></span>
          <span class="flex w-[46px] justify-center"><svg class="size-9"><use href="#lb6"/></svg></span>
          <span class="flex w-[46px] justify-center"><svg class="size-9"><use href="#lb7"/></svg></span>
        </div>
        <div class="flex h-full items-center border-r-2 border-[#8c8a84] pr-[7px] pl-[4px]">
          <div class="h-[40px] w-[8px] border-x-2 border-[#8f8d88] bg-[#f0efeb]"></div>
        </div>
        <div class="ml-[5px] h-[40px] w-[8px] border-x-2 border-[#8f8d88] bg-[#f0efeb]"></div>
      </div>
      <!-- body -->
      <div class="flex h-[845px]">
        <aside class="flex w-[69px] flex-col items-center border-r-2 border-[#8c8a84] pt-[6px]">
          <div class="mb-[4px] h-[7px] w-[58px] border-y-2 border-[#8f8d88] bg-[#f0efeb]"></div>
          <div class="flex h-[44px] w-full items-center justify-center pl-[2px]"><svg class="size-[38px]"><use href="#lv"/></svg></div>
          <div class="flex h-[44px] w-full items-center justify-center pl-[2px]"><svg class="size-[38px]"><use href="#lr"/></svg></div>
          <div class="flex h-[44px] w-full items-center justify-center pl-[2px]"><svg class="size-[38px]"><use href="#lpg"/></svg></div>
          <div class="flex h-[44px] w-full items-center justify-center pl-[2px]"><svg class="size-[38px]"><use href="#lfe"/></svg></div>
          <div class="flex h-[44px] w-full items-center justify-center pl-[2px]"><svg class="size-[38px]"><use href="#lsa"/></svg></div>
          <div class="flex h-[44px] w-full items-center justify-center pl-[2px]"><svg class="size-[38px]"><use href="#lwms"/></svg></div>
          <div class="flex h-[44px] w-full items-center justify-center pl-[2px]"><svg class="size-[38px]"><use href="#lwcs"/></svg></div>
          <div class="flex h-[44px] w-full items-center justify-center pl-[2px]"><svg class="size-[38px]"><use href="#lwfs"/></svg></div>
          <div class="flex h-[44px] w-full items-center justify-center pl-[2px]"><svg class="size-[38px]"><use href="#lcom"/></svg></div>
          <div class="relative flex h-[44px] w-full items-center justify-start pl-[7px]"><svg class="size-[38px]"><use href="#lnew"/></svg><span class="absolute right-[1px] top-[19px] size-0 border-x-[7px] border-t-[7px] border-x-transparent border-t-black"></span></div>
          <div class="flex h-[46px] w-full items-center justify-center pl-[2px]"><svg class="size-[38px]"><use href="#lrem"/></svg></div>
          <div class="w-full border-t-2 border-[#a5a39d] pt-[5px] pl-[5px]"><div class="h-[7px] w-[58px] border-y-2 border-[#8f8d88] bg-[#f0efeb]"></div></div>
        </aside>
        <div class="flex w-[443px] flex-col">
          <div class="flex h-[29px] items-center pl-[3px] text-[18px]">
            <span>Layer</span>
            <div class="ml-auto flex items-center gap-[10px] pr-[9px]">
              <svg class="size-[13px]" viewBox="0 0 13 13"><rect x="4" y="1" width="8" height="7" fill="none" stroke="#111" stroke-width="2"/><rect x="1" y="5" width="8" height="7" fill="#d4d0c8" stroke="#111" stroke-width="2"/></svg>
              <svg class="size-[14px]" viewBox="0 0 14 14"><path d="M2 2l10 10M12 2L2 12" stroke="#111" stroke-width="2"/></svg>
            </div>
          </div>
          <div class="mr-[8px] ml-[2px] h-[784px] border-t-2 border-l-2 border-[#4a4a4a] bg-white">
            <div class="flex h-[30px] items-center pl-[7px]">
              <span class="relative flex size-[14px] items-center justify-center border border-[#777] bg-white"><span class="h-[2px] w-[8px] bg-[#222]"></span></span>
              <span class="w-[7px] border-t border-dotted border-[#666]"></span>
              <div class="flex h-[30px] flex-1 items-center bg-[#000080] pl-[7px] text-[18px] text-white">
                <span class="flex size-[18px] items-center justify-center border border-[#ccc] bg-white"><svg class="size-[14px]" viewBox="0 0 14 14"><path d="M2 7l4 5 6-10" fill="none" stroke="#111" stroke-width="2.200"/></svg></span>
                <svg class="ml-[12px] size-[28px]" viewBox="0 0 24 24"><path d="M5 23l1-7L16 1l5 3-11 15z" fill="#9c8a6a" stroke="#bbb"/></svg>
                <u class="ml-[10px] tracking-[1.500px]">griante1</u>
              </div>
            </div>
            <div class="flex h-[22px] items-center pl-[40px]">
              <span class="h-[12px] w-[16px] -translate-y-[6px] border-b border-l border-dotted border-[#777]"></span>
              <span class="ml-[14px] size-[13px] rounded-full border-2 border-[#176a17] bg-[#63d463]"></span>
            </div>
          </div>
          <div class="flex h-[32px] pl-[3px]">
            <div class="flex h-[34px] w-[83px] items-center justify-center rounded-b-[2px] border-r-2 border-b-2 border-l border-[#f0efeb] border-r-[#333] border-b-[#333] text-[18px]">Layer</div>
            <div class="mr-[4px] flex flex-1 items-start border-t-2 border-[#333]">
              <div class="flex h-[28px] w-[109px] items-center justify-center rounded-b-[2px] border-r-2 border-b-2 border-l border-[#333] text-[17.500px]">Browser</div>
            </div>
          </div>
        </div>
        <!-- canvas: points sit on a free map -->
        <div class="ml-[3px] flex-1">
          <div class="relative h-[845px] overflow-hidden border-t-[3px] border-l-[3px] border-[#2a2a2a] bg-[#fdfdfd] text-[22.500px] leading-6 text-[#1a1a1a]">
            <div class="absolute top-[421px] left-[815px]"><span class="absolute -top-[6px] -left-[6px] size-[13px] rounded-full border-2 border-[#1f6b1f] bg-[#63d463]"></span><span class="absolute -top-[26px] left-0">0</span></div>
            <div class="absolute top-[45px] left-[536px]"><span class="absolute -top-[6px] -left-[6px] size-[13px] rounded-full border-2 border-[#1f6b1f] bg-[#63d463]"></span><span class="absolute -top-[26px] left-0">1</span></div>
            <div class="absolute top-[81px] left-[616px]"><span class="absolute -top-[6px] -left-[6px] size-[13px] rounded-full border-2 border-[#1f6b1f] bg-[#63d463]"></span><span class="absolute -top-[26px] left-0">2</span></div>
            <div class="absolute top-[143px] left-[604px]"><span class="absolute top-0 -left-[19px] h-[2px] w-[38px] bg-[#e0c078]"></span><span class="absolute -top-[19px] left-0 h-[38px] w-[2px] bg-[#e0c078]"></span><span class="absolute -top-[6px] -left-[6px] size-[13px] rounded-full border-2 border-[#1f6b1f] bg-[#63d463]"></span><span class="absolute -top-[26px] left-0">3</span></div>
            <div class="absolute top-[216px] left-[518px]"><span class="absolute top-0 -left-[19px] h-[2px] w-[38px] bg-[#e0c078]"></span><span class="absolute -top-[19px] left-0 h-[38px] w-[2px] bg-[#e0c078]"></span><span class="absolute -top-[6px] -left-[6px] size-[13px] rounded-full border-2 border-[#1f6b1f] bg-[#63d463]"></span><span class="absolute -top-[26px] left-0">4</span></div>
            <div class="absolute top-[124px] left-[1006px]"><span class="absolute -top-[6px] -left-[6px] size-[13px] rounded-full border-2 border-[#1f6b1f] bg-[#63d463]"></span><span class="absolute -top-[26px] left-0">5</span></div>
            <div class="absolute top-[207px] left-[1024px]"><span class="absolute -top-[6px] -left-[6px] size-[13px] rounded-full border-2 border-[#1f6b1f] bg-[#63d463]"></span><span class="absolute -top-[26px] left-0">6</span></div>
            <div class="absolute top-[309px] left-[1048px]"><span class="absolute -top-[6px] -left-[6px] size-[13px] rounded-full border-2 border-[#1f6b1f] bg-[#63d463]"></span><span class="absolute -top-[26px] left-0">7</span></div>
            <div class="absolute top-[592px] left-[1146px]"><span class="absolute -top-[6px] -left-[6px] size-[13px] rounded-full border-2 border-[#1f6b1f] bg-[#63d463]"></span><span class="absolute -top-[26px] left-0">8</span></div>
            <div class="absolute top-[674px] left-[925px]"><span class="absolute -top-[6px] -left-[6px] size-[13px] rounded-full border-2 border-[#1f6b1f] bg-[#63d463]"></span><span class="absolute -top-[26px] left-0">9</span></div>
            <div class="absolute top-[686px] left-[887px]"><span class="absolute -top-[6px] -left-[6px] size-[13px] rounded-full border-2 border-[#1f6b1f] bg-[#63d463]"></span><span class="absolute -top-[26px] left-0">10</span></div>
            <div class="absolute top-[817px] left-[378px]"><span class="absolute -top-[6px] -left-[6px] size-[13px] rounded-full border-2 border-[#1f6b1f] bg-[#63d463]"></span><span class="absolute -top-[26px] left-0">11</span></div>
            <div class="absolute top-[612px] left-[204px]"><span class="absolute -top-[6px] -left-[6px] size-[13px] rounded-full border-2 border-[#1f6b1f] bg-[#63d463]"></span><span class="absolute -top-[26px] left-0">12</span></div>
            <div class="absolute top-[23px] left-[980px]"><span class="absolute -top-[6px] -left-[6px] size-[13px] rounded-full border-2 border-[#1f6b1f] bg-[#63d463]"></span><span class="absolute -top-[26px] left-0">13</span></div>
          </div>
        </div>
      </div>
      <!-- status bar -->
      <footer class="flex h-[44px] items-center border-t-2 border-[#efeee9] pb-[2px] text-[18px]">
        <div class="w-[683px] pb-[2px] pl-[9px] text-[18.300px]">0 elementi selezionati dal layer griante1.</div>
        <span class="flex h-[32px] w-[33px] items-center justify-center border-2 border-t-[#f4f4f0] border-r-[#444] border-b-[#444] border-l-[#f4f4f0]"><svg class="size-[26px]" viewBox="0 0 26 26"><path d="M7 4c3-2 6 2 8 5s6 5 5 9-7 6-10 3-2-6-5-10-1-6 2-7z" fill="#999" stroke="#222" stroke-width="2"/><circle cx="15" cy="18" r="4" fill="#eee" stroke="#222" stroke-width="2"/><path d="M20 3l3 2" stroke="#222"/></svg></span>
        <span class="ml-[6px] flex h-[32px] w-[121px] items-center justify-center border border-[#aaa79f] text-[18px]">Coordinata:</span>
        <span class="ml-[4px] flex h-[31px] w-[449px] items-center justify-center border-2 border-t-[#2e2e2e] border-r-[#efeee9] border-b-[#efeee9] border-l-[#2e2e2e] bg-white text-[17.500px] tracking-[0.400px]">-18.02,5.53</span>
        <span class="ml-[6px] flex h-[32px] w-[63px] items-center justify-center border border-[#aaa79f]">Scala</span>
        <span class="ml-[5px] flex h-[31px] w-[151px] items-center border-2 border-t-[#2e2e2e] border-r-[#efeee9] border-b-[#2e2e2e] border-l-[#2e2e2e] bg-white pl-[7px] text-[17.500px] tracking-[0.800px]">1:319<span class="mr-[1px] ml-auto flex h-[24px] w-[24px] items-center justify-center border border-[#444] bg-[#d4d0c8]"><span class="size-0 border-x-[5px] border-t-[6px] border-x-transparent border-t-black"></span></span></span>
        <span class="ml-[7px] flex h-[32px] w-[32px] items-center justify-center border-2 border-t-[#f4f4f0] border-r-[#444] border-b-[#444] border-l-[#f4f4f0]"><svg class="size-[26px]" viewBox="0 0 26 26"><path d="M2 24L24 2v22z" fill="#7a9a78"/><circle cx="11" cy="9" r="6.500" fill="#f2cfc8" stroke="#d8352e" stroke-width="2"/><path d="M7 5l8 8" stroke="#d8352e" stroke-width="2"/></svg></span>
        <span class="ml-[5px] flex h-[32px] w-[123px] items-center border border-[#aaa79f] pl-[2px]"><span class="flex size-[18px] items-center justify-center border border-t-[#333] border-r-[#eee] border-b-[#eee] border-l-[#333] bg-white"><svg class="size-[14px]" viewBox="0 0 14 14"><path d="M2 7l4 5 6-10" fill="none" stroke="#111" stroke-width="2.200"/></svg></span><span class="ml-[9px] tracking-[0.200px]">Aggiorna</span></span>
        <span class="ml-[5px] flex h-[32px] w-[116px] items-center justify-center border border-[#aaa79f] tracking-[0.200px]">EPSG:3003</span>
        <span class="ml-[5px] flex h-[32px] w-[32px] items-center justify-center border-2 border-t-[#f4f4f0] border-r-[#444] border-b-[#444] border-l-[#f4f4f0]"><svg class="size-[26px]" viewBox="0 0 26 26"><circle cx="13" cy="13" r="10" fill="#777" stroke="#222" stroke-width="2"/><ellipse cx="13" cy="13" rx="5" ry="10" fill="none" stroke="#ddd"/><path d="M3 13h20" stroke="#ddd"/></svg></span>
        <svg class="mt-auto ml-auto size-[14px]" viewBox="0 0 14 14"><path d="M2 14L14 2M7 14l7-7M11 14l3-3" stroke="#777" stroke-width="1.500"/></svg>
      </footer>
    </div>
    <!-- desktop -->
    <div class="flex-1"></div>
    <!-- taskbar -->
    <div class="flex h-[37px] items-center bg-[linear-gradient(#0a0a0a_0%,#2f2f2f_10%,#6e6e6e_36%,#111_42%,#000_60%,#333_85%,#7a7a7a_100%)] text-[18px]">
      <svg class="ml-[8px] h-[36px] w-[40px]"><use href="#arch"/></svg>
      <svg class="ml-[7px] size-[30px]"><use href="#t1"/></svg>
      <svg class="ml-[14px] size-[28px]"><use href="#t2"/></svg>
      <svg class="ml-[9px] size-[29px]"><use href="#t3"/></svg>
      <svg class="ml-[12px] size-[28px]"><use href="#t4"/></svg>
      <svg class="ml-[12px] size-[27px]"><use href="#t5"/></svg>
      <svg class="ml-[11px] size-[31px]"><use href="#t6"/></svg>
      <svg class="ml-[13px] size-[28px]"><use href="#t7"/></svg>
      <svg class="ml-[7px] h-[37px] w-[36px]"><use href="#t8"/></svg>
      <svg class="ml-[8px] h-[33px] w-[29px]"><use href="#t9"/></svg>
      <svg class="ml-[12px] h-[33px] w-[28px]"><use href="#t10"/></svg>
      <svg class="ml-[12px] size-[30px]"><use href="#t11"/></svg>
      <div class="relative ml-[9px] h-[33px] w-[47px] bg-[#aaa]"><span class="absolute top-0 left-0 h-[33px] w-[24px] border border-black bg-[#efeeea]"></span><span class="absolute right-0 bottom-0 h-[22px] w-[24px] border border-black bg-[#efeeea]"></span></div>
      <span class="ml-[2px] h-[33px] w-[47px] border-2 border-[#111] bg-[#efeeea]"></span>
      <span class="ml-[5px] h-[33px] w-[42px] border-2 border-[#111] bg-[#efeeea]"></span>
      <span class="ml-[4px] h-[33px] w-[47px] border-2 border-[#111] bg-[#efeeea]"></span>
      <div class="ml-[11px] flex h-[32px] w-[219px] items-center rounded-md border border-[#8a8a8a] bg-gradient-to-b from-white to-[#e6e6e6] pb-[2px] pl-[4px] text-[#222]"><svg class="h-[28px] w-[26px]"><use href="#mini"/></svg><span class="ml-[4px] tracking-[0.200px]">QGIS exported</span></div>
      <div class="ml-[6px] flex h-[32px] w-[220px] items-center rounded-md border border-[#8a8a8a] bg-gradient-to-b from-white to-[#e6e6e6] pb-[2px] pl-[4px] text-[#222]"><svg class="h-[28px] w-[26px]"><use href="#mini"/></svg><span class="ml-[4px]">qgis.bin</span></div>
      <div class="ml-[5px] flex h-[32px] w-[219px] items-center rounded-md border border-[#8a8a8a] bg-gradient-to-b from-[#c4c4c2] to-[#dededa] pb-[2px] pl-[4px] text-[#222]"><svg class="h-[28px] w-[26px]"><use href="#mini"/></svg><span class="ml-[4px]">pntCircleByRad</span></div>
      <div class="ml-[258px] flex h-[37px] w-[54px] items-end bg-black pb-[2px]"><div class="h-[5px] w-full bg-[repeating-linear-gradient(90deg,#24c424_0_3px,#000_3px_5px)]"></div></div>
      <span class="ml-[4px] h-[37px] w-[9px] border border-black bg-[#22cc1e]"></span>
      <svg class="ml-[4px] size-[31px]"><use href="#net"/></svg>
      <span class="ml-[9px] pb-[2px] text-[18.500px] text-[#e6e6e6]">20:36</span>
      <span class="ml-[7px] pb-[2px] text-[18.500px] font-bold text-[#22d81e]">50</span>
      <svg class="ml-[4px] size-[30px]"><use href="#lockm"/></svg>
      <svg class="ml-[11px] size-[25px]"><use href="#power"/></svg>
    </div>
    <!-- floating windows on the desktop -->
    <div class="absolute top-[492px] left-[740px] flex h-[139px] w-[421px] flex-col border-2 border-[#222] bg-[#d4d0c8]">
      <div class="flex h-[31px] items-center bg-gradient-to-b from-[#555] to-[#111] pb-[2px] text-[#dcdcd8]">
        <svg class="ml-[6px] size-[22px]"><use href="#mini"/></svg>
        <span class="ml-[72px] text-[19px] font-bold tracking-[0.300px]">pntCircleByRad</span>
        <div class="ml-auto flex gap-[12px] pr-[6px]">
          <svg class="size-[13px]"><use href="#wmin"/></svg><svg class="size-[13px]"><use href="#wmax"/></svg><svg class="size-[13px]"><use href="#wclose"/></svg>
        </div>
      </div>
      <div class="mt-[15px] flex items-center pl-[16px] text-[18px]">
        <span class="w-[163px]"># vertices</span>
        <span class="flex h-[28px] w-[222px] items-center border-2 border-t-[#222] border-r-white border-b-white border-l-[#222] bg-white pl-[7px] text-[17.500px] tracking-[1.500px]">10<span class="h-[21px] w-px bg-black"></span></span>
      </div>
      <div class="mt-[19px] flex items-center gap-[11px] pl-[179px] text-[18px]">
        <span class="flex h-[37px] w-[106px] items-center justify-center border-[3px] border-t-[#222] border-r-[#111] border-b-[#111] border-l-[#222]">OK</span>
        <span class="flex h-[35px] w-[105px] items-center justify-center border-2 border-t-[#f2f1ed] border-r-[#333] border-b-[#333] border-l-[#f2f1ed]">Cancel</span>
      </div>
    </div>
    <div class="absolute top-[1050px] left-[611px] flex h-[65px] w-[338px] flex-col bg-[#d4d0c8]">
      <div class="flex h-[27px] items-center bg-gradient-to-b from-[#f5f5f2] to-[#dcdbd3] pb-[5px]">
        <svg class="ml-[5px] h-[24px] w-[22px]"><use href="#mini"/></svg>
        <span class="ml-[75px] text-[19.500px] font-bold text-[#8a8a86]">qgis.bin</span>
        <div class="ml-auto flex gap-[13px] pr-[8px] text-[#777]">
          <svg class="size-[12px]"><use href="#wmin"/></svg><svg class="size-[12px]"><use href="#wmax"/></svg><svg class="size-[12px]"><use href="#wclose"/></svg>
        </div>
      </div>
      <div class="flex h-[30px] items-center gap-[18px] pb-[4px] pl-[12px] text-[18px]"><span>Inquiry</span><span>Building</span><span>Editing</span><span>Help</span></div>
    </div>
  </section>
</main>
</body>
</html>
